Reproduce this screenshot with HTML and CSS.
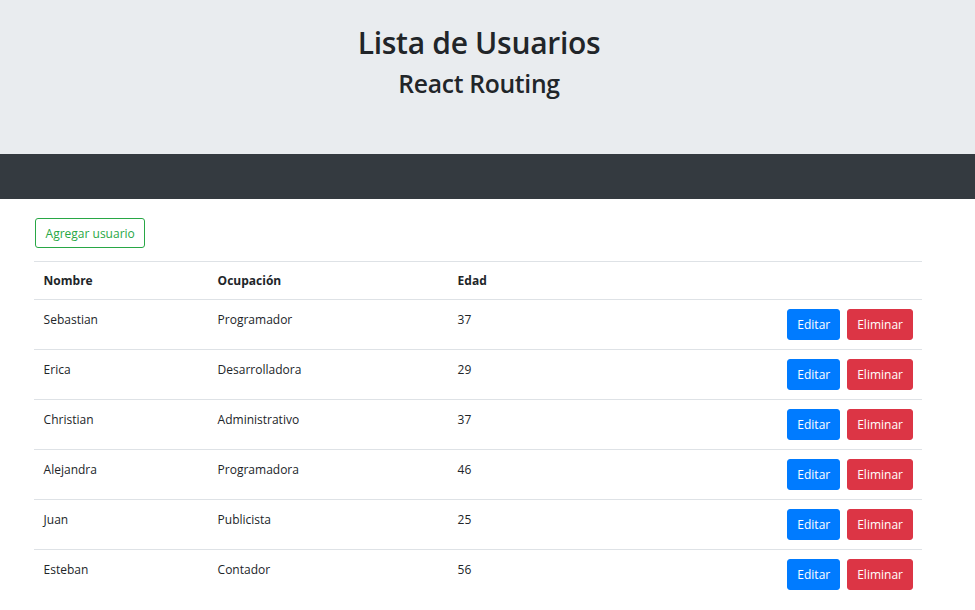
FILE: index.html
```html
<!DOCTYPE html>
<html lang="es">
<head>
<meta charset="utf-8">
<title>Lista de Usuarios</title>
<link rel="stylesheet" href="styles.css">
</head>
<body>
  <header class="jumbotron">
    <div class="hero-inner">
      <h1 class="hero-title">Lista de Usuarios</h1>
      <h2 class="hero-subtitle">React Routing</h2>
    </div>
  </header>
  <nav class="navbar"></nav>
  <main class="container">
    <button class="btn btn-outline-success" type="button">Agregar usuario</button>
    <table class="table">
      <thead>
        <tr>
          <th class="col-name">Nombre</th>
          <th class="col-job">Ocupación</th>
          <th class="col-age">Edad</th>
          <th></th>
        </tr>
      </thead>
      <tbody>
        <tr>
          <td>Sebastian</td><td>Programador</td><td>37</td>
          <td class="actions"><button class="btn btn-primary" type="button">Editar</button><button class="btn btn-danger" type="button">Eliminar</button></td>
        </tr>
        <tr>
          <td>Erica</td><td>Desarrolladora</td><td>29</td>
          <td class="actions"><button class="btn btn-primary" type="button">Editar</button><button class="btn btn-danger" type="button">Eliminar</button></td>
        </tr>
        <tr>
          <td>Christian</td><td>Administrativo</td><td>37</td>
          <td class="actions"><button class="btn btn-primary" type="button">Editar</button><button class="btn btn-danger" type="button">Eliminar</button></td>
        </tr>
        <tr>
          <td>Alejandra</td><td>Programadora</td><td>46</td>
          <td class="actions"><button class="btn btn-primary" type="button">Editar</button><button class="btn btn-danger" type="button">Eliminar</button></td>
        </tr>
        <tr>
          <td>Juan</td><td>Publicista</td><td>25</td>
          <td class="actions"><button class="btn btn-primary" type="button">Editar</button><button class="btn btn-danger" type="button">Eliminar</button></td>
        </tr>
        <tr>
          <td>Esteban</td><td>Contador</td><td>56</td>
          <td class="actions"><button class="btn btn-primary" type="button">Editar</button><button class="btn btn-danger" type="button">Eliminar</button></td>
        </tr>
      </tbody>
    </table>
  </main>
</body>
</html>
```
FILE: styles.css
```css
* { box-sizing: border-box; }

html, body {
  margin: 0;
  padding: 0;
}

body {
  font-family: "Open Sans", "Noto Sans", "Liberation Sans", sans-serif;
  font-size: 12px;
  line-height: 1.5;
  color: #212529;
  background: #fff;
}

.jumbotron {
  background: #e9ecef;
  height: 154px;
  padding: 23px 17px 0 0;
}

.hero-inner {
  text-align: center;
}

.hero-title {
  margin: 0;
  font-size: 30px;
  font-weight: 600;
  line-height: 40px;
  letter-spacing: -0.3px;
}

.hero-subtitle {
  margin: 0;
  font-size: 24.7px;
  font-weight: 600;
  line-height: 41px;
  letter-spacing: -0.3px;
}

.navbar {
  background: #343a40;
  height: 45px;
}

.container {
  padding: 19px 0 0 34px;
  width: 922px;
}

.btn {
  display: inline-block;
  height: 31px;
  font-family: inherit;
  font-size: 12px;
  line-height: 19px;
  padding: 5px 9px;
  border: 1px solid transparent;
  border-radius: 3px;
  background: transparent;
  cursor: pointer;
}

.btn-outline-success {
  height: 30px;
  padding: 5px 9.6px;
  color: #28a745;
  border-color: #28a745;
  margin-left: 1px;
}

.btn-primary {
  color: #fff;
  background: #007bff;
  border-color: #007bff;
}

.btn-danger {
  color: #fff;
  background: #dc3545;
  border-color: #dc3545;
  margin-left: 7px;
}

.table {
  width: 888px;
  margin-top: 13px;
  border-collapse: collapse;
}

.table th,
.table td {
  padding: 9px 9.6px;
  vertical-align: top;
  text-align: left;
  border-top: 1px solid #dee2e6;
}

.table td {
  padding-top: 11px;
}

.table td.actions {
  padding: 9px 9px 9px 9.6px;
  text-align: right;
  white-space: nowrap;
}

.table thead th {
  font-weight: 700;
  border-bottom: 1px solid #dee2e6;
  padding: 10px 9.6px 9px;
}

.table tbody tr:first-child td {
  border-top: 0;
}

.col-name { width: 174px; }
.col-job { width: 240px; }
.col-age { width: 200px; }
```
